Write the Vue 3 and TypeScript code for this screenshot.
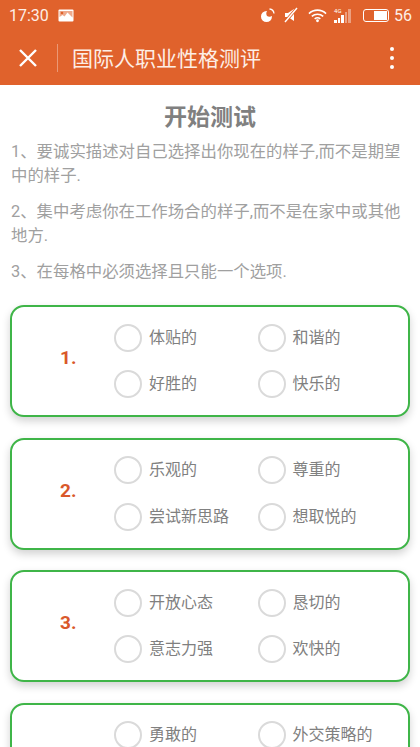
<script setup lang="ts">
interface Question { no: number; options: string[] }
const questions: Question[] = [
  { no: 1, options: ['体贴的', '和谐的', '好胜的', '快乐的'] },
  { no: 2, options: ['乐观的', '尊重的', '尝试新思路', '想取悦的'] },
  { no: 3, options: ['开放心态', '恳切的', '意志力强', '欢快的'] },
  { no: 4, options: ['勇敢的', '外交策略的', '', ''] }
]
const intro = [
  '1、要诚实描述对自己选择出你现在的样子,而不是期望中的样子.',
  '2、集中考虑你在工作场合的样子,而不是在家中或其他地方.',
  '3、在每格中必须选择且只能一个选项.'
]
</script>

<template>
  <div class="page">
    <header class="top">
      <div class="status">
        <span class="time">17:30</span>
        <svg class="pic" viewBox="0 0 16 13" width="16" height="13">
          <rect x="0.5" y="0.5" width="15" height="12" rx="1" fill="#fff" />
          <circle cx="4" cy="4" r="1.3" fill="#e0622c" />
          <path d="M1.5 8l3-2 2 1.5 3-4 5 5V2h-13z" fill="#e0622c" opacity="0.55" />
        </svg>
        <span class="spacer"></span>
        <svg class="moon" viewBox="0 0 16 16" width="16" height="16">
          <circle cx="6.5" cy="9.5" r="5.5" fill="#fff" />
          <circle cx="9.5" cy="6.5" r="3.2" fill="#e0622c" />
          <path d="M9.5 2a5 5 0 0 1 4.5 4.5" fill="none" stroke="#fff" stroke-width="1.3" />
        </svg>
        <svg class="mute" viewBox="0 0 14 16" width="14" height="16">
          <path d="M1 6h3l6-4v12l-6-4H1z" fill="#fff" />
          <path d="M1 15L13 1" stroke="#e0622c" stroke-width="3" />
          <path d="M1 15L13 1" stroke="#fff" stroke-width="1.4" />
        </svg>
        <svg class="wifi" viewBox="0 0 20 15" width="19" height="15">
          <path d="M1 5.5a13 13 0 0 1 18 0M4 8.5a9 9 0 0 1 12 0M7 11a5 5 0 0 1 6 0" fill="none" stroke="#fff" stroke-width="1.7" />
          <circle cx="10" cy="13" r="1.5" fill="#fff" />
        </svg>
        <span class="signal">
          <small>4G</small>
          <i class="b1"></i><i class="b2"></i><i class="b3"></i><i class="b4"></i><i class="b5"></i>
        </span>
        <span class="battery"><span class="level"></span></span>
        <span class="pct">56</span>
      </div>
      <div class="bar">
        <svg class="close" viewBox="0 0 18 18" width="18" height="18">
          <path d="M1 1l16 16M17 1L1 17" stroke="#fff" stroke-width="2.4" fill="none" />
        </svg>
        <span class="divider"></span>
        <span class="title">国际人职业性格测评</span>
        <span class="more"><i></i><i></i><i></i></span>
      </div>
    </header>

    <main class="content">
      <h1>开始测试</h1>
      <p v-for="line in intro" :key="line" class="intro">{{ line }}</p>

      <section v-for="q in questions" :key="q.no" class="card">
        <div class="num">{{ q.no }}.</div>
        <div class="opts">
          <label v-for="(o, i) in q.options" :key="i" class="opt">
            <span class="radio"></span>
            <span class="txt">{{ o }}</span>
          </label>
        </div>
      </section>
    </main>
  </div>
</template>

<style>
html, body { margin: 0; padding: 0; background: #fff; overflow: hidden; }
</style>

<style scoped>
.page {
  width: 420px;
  height: 747px;
  overflow: hidden;
  font-family: Roboto, "Noto Sans CJK SC", sans-serif;
  background: #fff;
}
.top { background: #e0622c; height: 85px; color: #fff; }
.status {
  height: 30px;
  display: flex;
  align-items: center;
  padding: 0 8px 0 9px;
}
.time { font-size: 16px; color: #fdeee6; width: 40px; }
.pic { margin-left: 9px; }
.spacer { flex: 1; }
.moon { margin-right: 8px; }
.mute { margin-right: 10px; }
.wifi { margin-right: 7px; }
.signal {
  position: relative;
  display: flex;
  align-items: flex-end;
  gap: 1px;
  height: 15px;
  width: 21px;
  margin-right: 8px;
}
.signal small {
  position: absolute;
  left: 0;
  top: -1px;
  font-size: 6px;
  line-height: 7px;
}
.signal i { display: block; width: 2.6px; background: #fff; }
.signal .b1 { height: 3px; }
.signal .b2 { height: 5px; }
.signal .b3 { height: 8px; }
.signal .b4 { height: 11px; opacity: 0.4; }
.signal .b5 { height: 14px; opacity: 0.4; }
.battery {
  display: flex;
  justify-content: flex-end;
  box-sizing: border-box;
  width: 26px;
  height: 13px;
  border: 1.5px solid #fff;
  border-radius: 3px;
  padding: 1px;
  margin-right: 5px;
}
.level { width: 13px; background: #fff; }
.pct { font-size: 16px; color: #fdeee6; }
.bar {
  height: 55px;
  display: flex;
  align-items: center;
  padding-left: 19px;
}
.close { flex: none; }
.divider {
  width: 1px;
  height: 28px;
  background: rgba(255, 255, 255, 0.35);
  margin: 0 14px 0 20px;
}
.title { font-size: 21px; color: #fdeee6; flex: 1; padding-bottom: 2px; }
.more {
  display: flex;
  flex-direction: column;
  gap: 5px;
  margin-right: 26px;
}
.more i { display: block; width: 4px; height: 4px; border-radius: 50%; background: #fff; }
.content { padding: 0 10px; }
h1 {
  margin: 0;
  padding: 18px 0 7px;
  font-size: 23px;
  line-height: 30px;
  font-weight: 700;
  color: #808080;
  text-align: center;
}
.intro {
  margin: 0 0 12px;
  padding-left: 1px;
  font-size: 16.4px;
  line-height: 24px;
  color: #a0a0a0;
}
.card {
  box-sizing: border-box;
  height: 112px;
  margin-top: 20.5px;
  display: flex;
  border: 2px solid #3fb548;
  border-radius: 14px;
  box-shadow: 0 4px 8px rgba(0, 0, 0, 0.18);
  background: #fff;
}
.intro + .card { margin-top: 21px; }
.num {
  width: 102px;
  padding: 44px 0 0 48px;
  box-sizing: border-box;
  font-size: 19px;
  line-height: 14px;
  font-weight: 700;
  color: #d9582a;
}
.opts {
  display: grid;
  grid-template-columns: 143.5px 1fr;
  grid-auto-rows: 46.5px;
  padding-top: 7.5px;
}
.opt { display: flex; align-items: center; gap: 7px; }
.radio {
  box-sizing: border-box;
  width: 28px;
  height: 28px;
  border: 2px solid #dadada;
  border-radius: 50%;
  flex: none;
}
.txt { font-size: 16px; color: #808080; padding-bottom: 4px; }
</style>
